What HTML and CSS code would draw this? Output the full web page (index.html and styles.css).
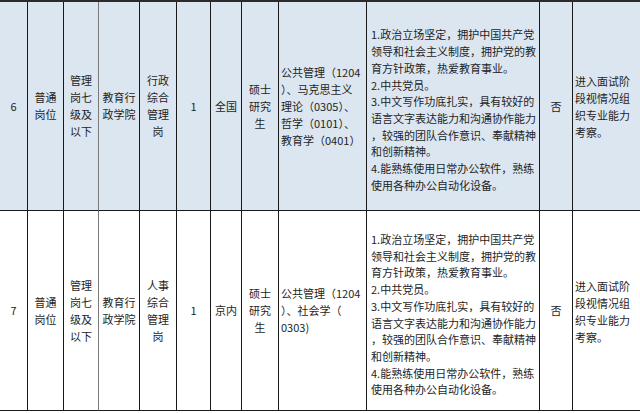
FILE: index.html
```html
<!DOCTYPE html>
<html lang="zh-CN">
<head>
<meta charset="utf-8">
<title>岗位表</title>
<link rel="stylesheet" href="styles.css">
</head>
<body>
<table class="jobs">
  <colgroup>
    <col class="c-no"><col class="c-type"><col class="c-level"><col class="c-dept"><col class="c-name"><col class="c-count"><col class="c-area"><col class="c-edu"><col class="c-major"><col class="c-req"><col class="c-exam"><col class="c-note">
  </colgroup>
  <tbody>
    <tr class="row row-blue">
      <td class="ctr">6</td>
      <td class="ctr">普通<br>岗位</td>
      <td class="ctr gray-r">管理<br>岗七<br>级及<br>以下</td>
      <td class="ctr">教育行<br>政学院</td>
      <td class="ctr">行政<br>综合<br>管理<br>岗</td>
      <td class="ctr">1</td>
      <td class="ctr">全国</td>
      <td class="ctr">硕士<br>研究<br>生</td>
      <td class="left">公共管理（1204<br>）、马克思主义<br>理论（0305）、<br>哲学（0101）、<br>教育学（0401）</td>
      <td class="left req">1.政治立场坚定，拥护中国共产党<br>领导和社会主义制度，拥护党的教<br>育方针政策，热爱教育事业。<br>2.中共党员。<br>3.中文写作功底扎实，具有较好的<br>语言文字表达能力和沟通协作能力<br>，较强的团队合作意识、奉献精神<br>和创新精神。<br>4.能熟练使用日常办公软件，熟练<br>使用各种办公自动化设备。</td>
      <td class="ctr">否</td>
      <td class="left note">进入面试阶<br>段视情况组<br>织专业能力<br>考察。</td>
    </tr>
    <tr class="row row-white">
      <td class="ctr">7</td>
      <td class="ctr">普通<br>岗位</td>
      <td class="ctr gray-r">管理<br>岗七<br>级及<br>以下</td>
      <td class="ctr">教育行<br>政学院</td>
      <td class="ctr">人事<br>综合<br>管理<br>岗</td>
      <td class="ctr">1</td>
      <td class="ctr">京内</td>
      <td class="ctr">硕士<br>研究<br>生</td>
      <td class="left">公共管理（1204<br>）、社会学（<br>0303)</td>
      <td class="left req">1.政治立场坚定，拥护中国共产党<br>领导和社会主义制度，拥护党的教<br>育方针政策，热爱教育事业。<br>2.中共党员。<br>3.中文写作功底扎实，具有较好的<br>语言文字表达能力和沟通协作能力<br>，较强的团队合作意识、奉献精神<br>和创新精神。<br>4.能熟练使用日常办公软件，熟练<br>使用各种办公自动化设备。</td>
      <td class="ctr">否</td>
      <td class="left note">进入面试阶<br>段视情况组<br>织专业能力<br>考察。</td>
    </tr>
  </tbody>
</table>
</body>
</html>
```

FILE: styles.css
```css
html, body {
  margin: 0;
  padding: 0;
  background: #ffffff;
}

body {
  width: 640px;
  height: 413px;
  overflow: hidden;
  font-family: "Noto Sans CJK SC", "Microsoft YaHei", sans-serif;
  font-size: 11px;
  line-height: 17px;
  color: #1e1e1e;
}

.jobs {
  table-layout: fixed;
  border-collapse: separate;
  border-spacing: 0;
  width: 641px;
  border-top: 2px solid #2b2b2b;
}

.c-no { width: 28px; }
.c-type { width: 36px; }
.c-level { width: 35px; }
.c-dept { width: 41px; }
.c-name { width: 37px; }
.c-count { width: 34px; }
.c-area { width: 31px; }
.c-edu { width: 37px; }
.c-major { width: 88px; }
.c-req { width: 173px; }
.c-exam { width: 33px; }
.c-note { width: 68px; }

.jobs td {
  box-sizing: border-box;
  padding: 0;
  border-right: 1px solid #1a1a1a;
  border-bottom: 1px solid #1a1a1a;
  vertical-align: middle;
  white-space: nowrap;
  overflow: visible;
}

.jobs td.gray-r {
  border-right: 1px solid #7a7a7a;
}

.row-blue {
  height: 209px;
  background: #dce6f1;
}

.row-white {
  height: 200px;
  background: #ffffff;
}

.ctr {
  text-align: center;
}

.left {
  text-align: left;
  padding-left: 2px !important;
}

.req {
  padding-left: 4px !important;
  padding-top: 8px !important;
  line-height: 16.7px;
}

.note {
  padding-left: 2px !important;
  padding-top: 2px !important;
}
```
